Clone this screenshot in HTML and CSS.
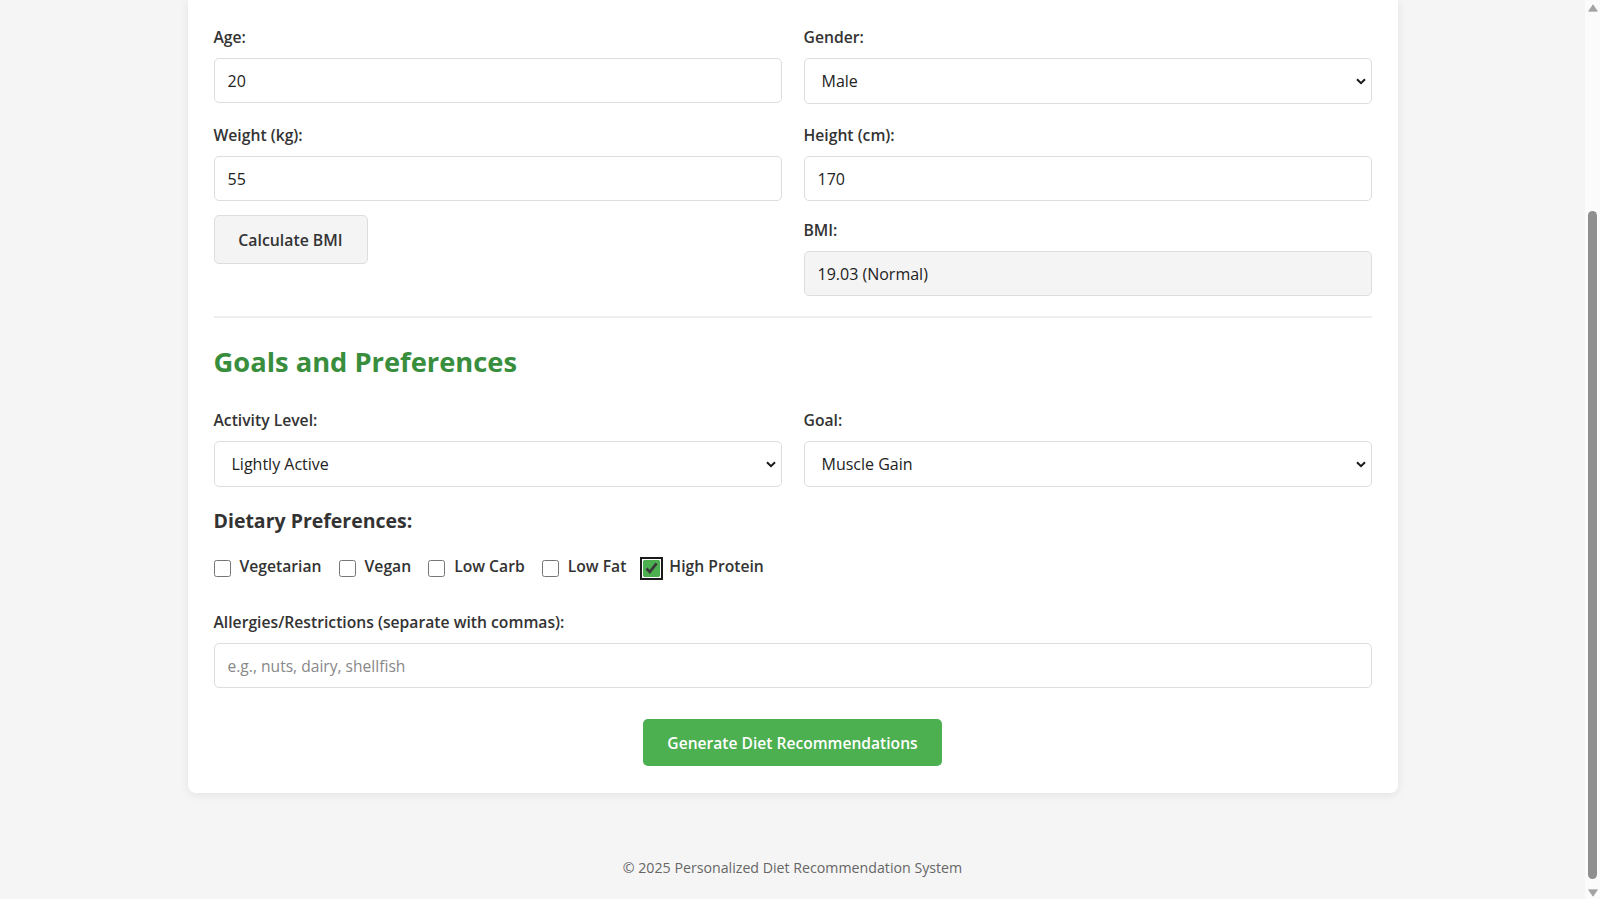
FILE: index.html
```html
<!DOCTYPE html>
<html lang="en">
<head>
<meta charset="utf-8">
<title>Personalized Diet Recommendation System</title>
<link rel="stylesheet" href="styles.css">
</head>
<body>
<div class="viewport">
  <div class="main">
    <main class="card">
      <div class="row row-1">
        <div class="col">
          <label class="field-label" for="age">Age:</label>
          <input class="text-input" id="age" type="text" value="20">
        </div>
        <div class="col">
          <label class="field-label" for="gender">Gender:</label>
          <div class="select-wrap">
            <select class="select-input" id="gender"><option>Male</option><option>Female</option></select>
            <svg class="chev" width="10" height="7" viewBox="0 0 10 7"><path d="M1 1.2 L5 5.2 L9 1.2" fill="none" stroke="#1a1a1a" stroke-width="2"/></svg>
          </div>
        </div>
      </div>

      <div class="row row-2">
        <div class="col">
          <label class="field-label" for="weight">Weight (kg):</label>
          <input class="text-input" id="weight" type="text" value="55">
        </div>
        <div class="col">
          <label class="field-label" for="height">Height (cm):</label>
          <input class="text-input" id="height" type="text" value="170">
        </div>
      </div>

      <div class="row row-3">
        <div class="col">
          <button class="btn-secondary" type="button">Calculate BMI</button>
        </div>
        <div class="col col-bmi">
          <label class="field-label" for="bmi">BMI:</label>
          <input class="text-input readonly" id="bmi" type="text" value="19.03 (Normal)" readonly>
        </div>
      </div>

      <hr class="divider">

      <h2 class="section-title">Goals and Preferences</h2>

      <div class="row row-4">
        <div class="col">
          <label class="field-label" for="activity">Activity Level:</label>
          <div class="select-wrap">
            <select class="select-input" id="activity"><option>Lightly Active</option></select>
            <svg class="chev" width="10" height="7" viewBox="0 0 10 7"><path d="M1 1.2 L5 5.2 L9 1.2" fill="none" stroke="#1a1a1a" stroke-width="2"/></svg>
          </div>
        </div>
        <div class="col">
          <label class="field-label" for="goal">Goal:</label>
          <div class="select-wrap">
            <select class="select-input" id="goal"><option>Muscle Gain</option></select>
            <svg class="chev" width="10" height="7" viewBox="0 0 10 7"><path d="M1 1.2 L5 5.2 L9 1.2" fill="none" stroke="#1a1a1a" stroke-width="2"/></svg>
          </div>
        </div>
      </div>

      <h3 class="sub-title">Dietary Preferences:</h3>

      <div class="checks">
        <label class="check"><input type="checkbox" class="cb"> Vegetarian</label>
        <label class="check"><input type="checkbox" class="cb"> Vegan</label>
        <label class="check"><input type="checkbox" class="cb"> Low Carb</label>
        <label class="check"><input type="checkbox" class="cb"> Low Fat</label>
        <label class="check"><input type="checkbox" class="cb focused" checked> High Protein</label>
      </div>

      <label class="field-label allergy-label" for="allergies">Allergies/Restrictions (separate with commas):</label>
      <input class="text-input" id="allergies" type="text" placeholder="e.g., nuts, dairy, shellfish">

      <div class="actions">
        <button class="btn-primary" type="button">Generate Diet Recommendations</button>
      </div>
    </main>

    <footer class="site-footer">© 2025 Personalized Diet Recommendation System</footer>
  </div>

  <div class="scrollbar" aria-hidden="true">
    <div class="sb-arrow">
      <svg width="10" height="8" viewBox="0 0 10 8"><path d="M5 0.8 L9.4 7.2 L0.6 7.2 Z" fill="#a3a3a3" stroke="#a3a3a3" stroke-width="0.8" stroke-linejoin="round"/></svg>
    </div>
    <div class="sb-track"><div class="sb-thumb"></div></div>
    <div class="sb-arrow sb-arrow-down">
      <svg width="10" height="8" viewBox="0 0 10 8"><path d="M0.6 0.8 L9.4 0.8 L5 7.2 Z" fill="#a3a3a3" stroke="#a3a3a3" stroke-width="0.8" stroke-linejoin="round"/></svg>
    </div>
  </div>
</div>
</body>
</html>
```

FILE: styles.css
```css
* { box-sizing: border-box; }
html, body { margin: 0; height: 100%; }
body {
  font-family: "Open Sans", "Noto Sans", "Liberation Sans", sans-serif;
  color: #333;
  background: #f5f5f5;
}
.viewport {
  display: flex;
  height: 100vh;
  overflow: hidden;
}
.main {
  flex: 1 1 auto;
  min-width: 0;
  display: flex;
  flex-direction: column;
  align-items: center;
}

.card {
  width: 1210px;
  background: #fff;
  border-radius: 0 0 8px 8px;
  box-shadow: 0 2px 10px rgba(0, 0, 0, 0.08);
  padding: 25px 26px 27px;
}

.row { display: flex; gap: 22px; }
.col { flex: 1 1 0; min-width: 0; }
.row-1 { margin-bottom: 19px; }
.row-2 { margin-bottom: 14px; }
.col-bmi { padding-top: 3px; }

.field-label {
  display: block;
  font-size: 15.7px;
  line-height: 24px;
  font-weight: 600;
  color: #333;
  margin-bottom: 9px;
}
.text-input {
  display: block;
  width: 100%;
  height: 45px;
  border: 1px solid #ddd;
  border-radius: 5px;
  padding: 0 13px;
  font-family: inherit;
  font-size: 16px;
  color: #222;
  background: #fff;
  outline: none;
}
.text-input::placeholder { color: #888; font-size: 15.6px; }
.text-input.readonly { background: #f4f4f4; }

.select-wrap { position: relative; }
.select-input {
  display: block;
  width: 100%;
  height: 46px;
  border: 1px solid #ddd;
  border-radius: 5px;
  padding: 0 17px;
  font-family: inherit;
  font-size: 16px;
  color: #222;
  background: #fff;
  appearance: none;
  -webkit-appearance: none;
  outline: none;
}
.chev { position: absolute; right: 6px; top: 20px; pointer-events: none; }

.btn-secondary {
  display: block;
  width: 154px;
  height: 49px;
  background: #f4f4f4;
  border: 1px solid #ddd;
  border-radius: 5px;
  font-family: inherit;
  font-size: 15.8px;
  font-weight: 600;
  color: #333;
  padding: 0;
}

.divider {
  border: 0;
  border-top: 2px solid #eee;
  margin: 20px 0 26px;
}

.section-title {
  margin: 0 0 28px;
  font-size: 27.3px;
  line-height: 36px;
  font-weight: 700;
  color: #388e3c;
}

.row-4 { margin-bottom: 21px; }
.sub-title {
  margin: 0 0 20px;
  font-size: 19.5px;
  line-height: 26px;
  font-weight: 700;
  color: #333;
}
.checks {
  display: flex;
  gap: 17px;
  margin-bottom: 32px;
}
.check {
  display: flex;
  align-items: center;
  gap: 9px;
  font-size: 15.7px;
  line-height: 24px;
  font-weight: 600;
  color: #333;
}
.cb {
  width: 17px;
  height: 17px;
  margin: 4px 0 0;
  accent-color: #4caf50;
}
.cb.focused { outline: 2px solid #1a1a1a; outline-offset: 1px; border-radius: 3px; }

.allergy-label { margin-bottom: 9px; }

.actions { display: flex; justify-content: center; margin-top: 31px; }
.btn-primary {
  height: 47px;
  width: 299px;
  padding: 0;
  background: #4caf50;
  color: #fff;
  border: 0;
  border-radius: 5px;
  font-family: inherit;
  font-size: 15.6px;
  font-weight: 600;
}

.site-footer {
  margin-top: 44px;
  padding: 20px 0;
  line-height: 22px;
  text-align: center;
  font-size: 14.2px;
  color: #666;
}

.scrollbar {
  flex: 0 0 15px;
  display: flex;
  flex-direction: column;
  align-items: center;
  background: #fbfbfb;
}
.sb-arrow {
  height: 17px;
  display: flex;
  align-items: center;
  justify-content: center;
  padding-bottom: 2px;
}
.sb-arrow-down { padding-bottom: 0; padding-top: 4px; }
.sb-track {
  flex: 1 1 auto;
  width: 100%;
  display: flex;
  flex-direction: column;
  justify-content: flex-end;
  align-items: center;
  padding-bottom: 3px;
}
.sb-thumb {
  width: 9px;
  height: 668px;
  border-radius: 5px;
  background: #8f8f8f;
}
```
